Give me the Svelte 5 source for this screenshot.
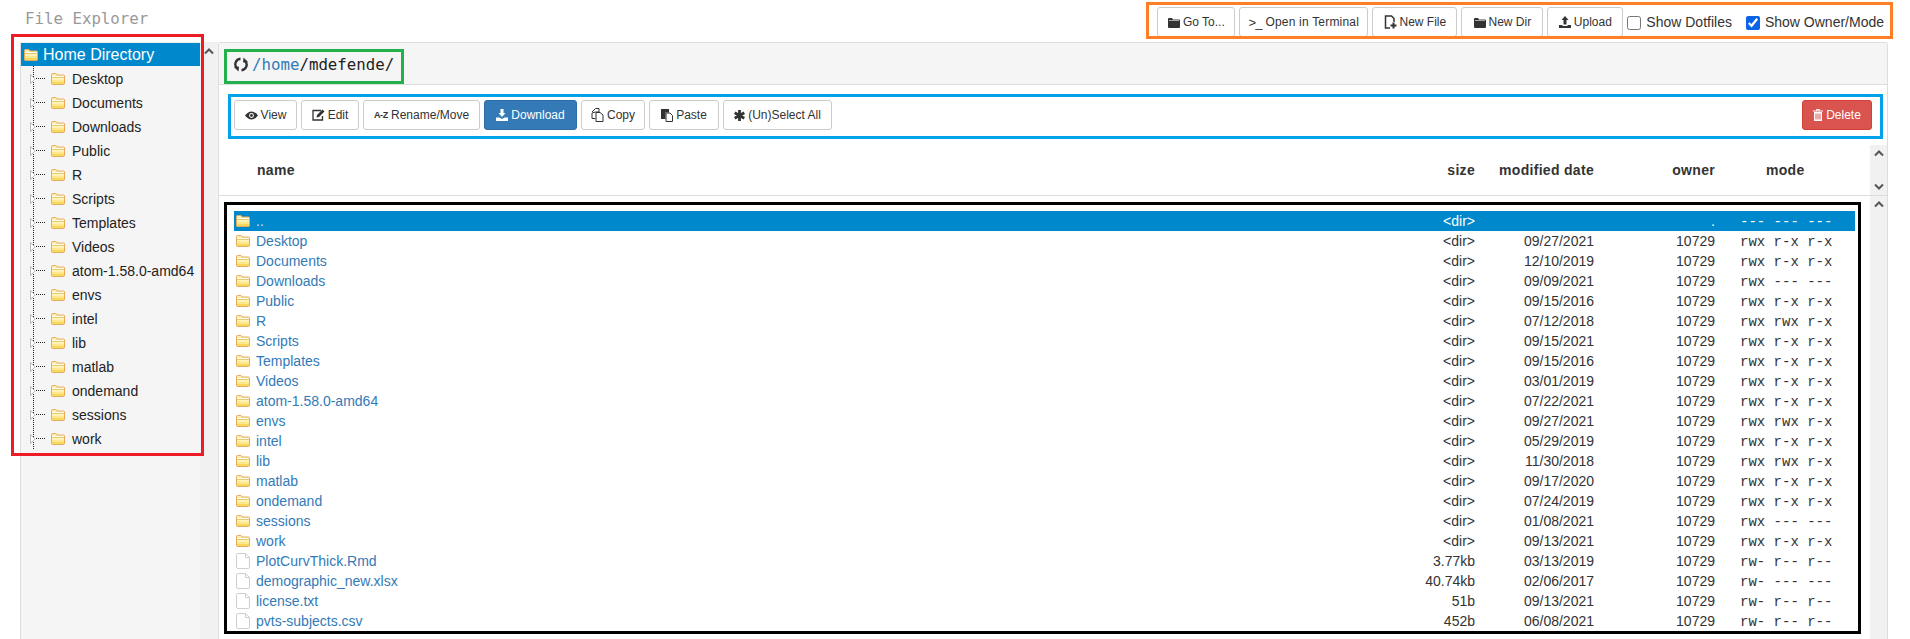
<script>
  const treeDirs = ["Desktop", "Documents", "Downloads", "Public", "R", "Scripts", "Templates", "Videos", "atom-1.58.0-amd64", "envs", "intel", "lib", "matlab", "ondemand", "sessions", "work"];

  const rwx = "rwx r-x r-x";
  const files = [
    { name: "..", dir: true, size: "<dir>", date: "", owner: ".", mode: "--- --- ---", selected: true },
    { name: "Desktop", dir: true, size: "<dir>", date: "09/27/2021", owner: "10729", mode: rwx },
    { name: "Documents", dir: true, size: "<dir>", date: "12/10/2019", owner: "10729", mode: rwx },
    { name: "Downloads", dir: true, size: "<dir>", date: "09/09/2021", owner: "10729", mode: "rwx --- ---" },
    { name: "Public", dir: true, size: "<dir>", date: "09/15/2016", owner: "10729", mode: rwx },
    { name: "R", dir: true, size: "<dir>", date: "07/12/2018", owner: "10729", mode: "rwx rwx r-x" },
    { name: "Scripts", dir: true, size: "<dir>", date: "09/15/2021", owner: "10729", mode: rwx },
    { name: "Templates", dir: true, size: "<dir>", date: "09/15/2016", owner: "10729", mode: rwx },
    { name: "Videos", dir: true, size: "<dir>", date: "03/01/2019", owner: "10729", mode: rwx },
    { name: "atom-1.58.0-amd64", dir: true, size: "<dir>", date: "07/22/2021", owner: "10729", mode: rwx },
    { name: "envs", dir: true, size: "<dir>", date: "09/27/2021", owner: "10729", mode: "rwx rwx r-x" },
    { name: "intel", dir: true, size: "<dir>", date: "05/29/2019", owner: "10729", mode: rwx },
    { name: "lib", dir: true, size: "<dir>", date: "11/30/2018", owner: "10729", mode: "rwx rwx r-x" },
    { name: "matlab", dir: true, size: "<dir>", date: "09/17/2020", owner: "10729", mode: rwx },
    { name: "ondemand", dir: true, size: "<dir>", date: "07/24/2019", owner: "10729", mode: rwx },
    { name: "sessions", dir: true, size: "<dir>", date: "01/08/2021", owner: "10729", mode: "rwx --- ---" },
    { name: "work", dir: true, size: "<dir>", date: "09/13/2021", owner: "10729", mode: rwx },
    { name: "PlotCurvThick.Rmd", size: "3.77kb", date: "03/13/2019", owner: "10729", mode: "rw- r-- r--" },
    { name: "demographic_new.xlsx", size: "40.74kb", date: "02/06/2017", owner: "10729", mode: "rw- --- ---" },
    { name: "license.txt", size: "51b", date: "09/13/2021", owner: "10729", mode: "rw- r-- r--" },
    { name: "pvts-subjects.csv", size: "452b", date: "06/08/2021", owner: "10729", mode: "rw- r-- r--" }
  ];
</script>

{#snippet folder()}
  <svg class="folder" width="14" height="12" viewBox="0 0 14 12">
    <path d="M.5 1.5Q.5.5 1.5.5H5L6 2H12.500Q13.500 2 13.500 3V10.500Q13.500 11.500 12.500 11.500H1.500Q.5 11.500.5 10.500Z" fill="#fdf0b0" stroke="#e6ac5c" />
    <rect x="1" y="3" width="12" height="1" fill="#fffdf2" />
    <rect x="1" y="4" width="12" height="1" fill="#e9c877" />
    <rect x="1" y="5" width="12" height="2" fill="#fff3b5" />
    <rect x="1" y="7" width="12" height="2" fill="#fde88c" />
    <rect x="1" y="9" width="12" height="2" fill="#f8d75f" />
  </svg>
{/snippet}

{#snippet fileIcon()}
  <svg class="folder" width="14" height="16" viewBox="0 0 14 16">
    <path d="M1.500.5H9.500L13.500 4.500V14Q13.500 15.500 12 15.500H2Q.5 15.500.5 14V1.500Q.5.5 1.500.5Z" fill="#fff" stroke="#cfcfcf" />
    <path d="M9.500.5V4.500H13.500" fill="none" stroke="#cfcfcf" />
  </svg>
{/snippet}

{#snippet chevron(down)}
  <svg class="chev" width="10" height="7" viewBox="0 0 10 7">
    <path d={down ? "M1 1.500 5 5.500 9 1.500" : "M1 5.500 5 1.500 9 5.500"} fill="none" stroke="#555" stroke-width="2" />
  </svg>
{/snippet}

{#snippet folderOpen()}
  <svg width="12" height="11" viewBox="0 0 12 11"><path d="M0 2Q0 1 1 1H4L5 2.500H11Q12 2.500 12 3.500V10Q12 11 11 11H1Q0 11 0 10Z" fill="currentColor" /><path d="M1 3.500H11" stroke="#fff" stroke-width=".6" /></svg>
{/snippet}

<div class="page">
  <header class="top">
    <h1>File Explorer</h1>
    <div class="top-tools">
      <button class="w78">{@render folderOpen()} Go To...</button>
      <button class="w129 wide"><span class="term">&gt;_</span> Open in Terminal</button>
      <button class="w85">
        <svg width="13" height="14" viewBox="0 0 13 14"><path d="M6 13H1.500V1H7.500L10 3.500V7" fill="none" stroke="currentColor" stroke-width="1.500" /><path d="M9.500 7.500V13.500M6.500 10.500H12.500" stroke="currentColor" stroke-width="2" /></svg>
        New File
      </button>
      <button class="w82">{@render folderOpen()} New Dir</button>
      <button class="w76">
        <svg width="12" height="12" viewBox="0 0 12 12"><path d="M6 0 9.500 4H7.500V8.500H4.500V4H2.500Z M0 9H3.500V10H8.500V9H12V12H0Z" fill="currentColor" /></svg>
        Upload
      </button>
      <label><input type="checkbox" /> Show Dotfiles</label>
      <label><input type="checkbox" checked /> Show Owner/Mode</label>
    </div>
  </header>

  <main class="panes">
    <aside class="tree">
      <div class="tree-list">
        <div class="home">{@render folder()}<span>Home Directory</span></div>
        <ul>
          {#each treeDirs as d}
            <li>
              <svg class="tri" width="6" height="10" viewBox="0 0 6 10"><path d="M.5.5 5 5 .5 9.500Z" fill="#fff" stroke="#bbb" /></svg>
              <i class="dash"></i>
              {@render folder()}
              <span>{d}</span>
            </li>
          {/each}
        </ul>
      </div>
      <div class="scroll">{@render chevron(false)}</div>
    </aside>

    <section class="content">
      <div class="crumb">
        <svg width="14" height="15" viewBox="0 0 14 15"><path d="M6.500 1.800A5.500 5.500 0 0 0 3 11.200M7.500 13.200A5.500 5.500 0 0 0 11 3.800" fill="none" stroke="#333" stroke-width="2.400" /><path d="M0 10 5 9.500 4.500 14.500ZM14 5 9 5.500 9.500 .5Z" fill="#333" /></svg>
        <span class="path"><a href="#/">/home</a>/mdefende/</span>
      </div>

      <div class="actions">
        <button class="w63">
          <svg width="13" height="9" viewBox="0 0 13 9"><path d="M0 4.500Q6.500-3.500 13 4.500 6.500 12.500 0 4.500Z" fill="currentColor" /><circle cx="6.500" cy="4.500" r="2.400" fill="#fff" /><circle cx="6.500" cy="4.500" r="1.400" fill="currentColor" /></svg>
          View
        </button>
        <button class="w58">
          <svg width="13" height="12" viewBox="0 0 13 12"><path d="M9 1.500H1V11H10.500V7" fill="none" stroke="currentColor" stroke-width="1.300" /><path d="M4.500 8.500 5 6 10.500.5 12.500 2.500 7 8Z" fill="currentColor" /></svg>
          Edit
        </button>
        <button class="w117"><span class="az">A-Z</span> Rename/Move</button>
        <button class="primary w93">
          <svg width="12" height="12" viewBox="0 0 12 12"><path d="M4.500 0H7.500V4H9.500L6 8 2.500 4H4.500Z M0 8.500H3.500L6 10 8.500 8.500H12V12H0Z" fill="currentColor" /></svg>
          Download
        </button>
        <button class="w64">
          <svg width="13" height="14" viewBox="0 0 13 14"><path d="M4.500.5H8V4H4.500L1 5V10.500H4.500M4.500.5 1 4" fill="none" stroke="currentColor" /><path d="M5 4.500H9L12 7V13.500H5Z" fill="#fff" stroke="currentColor" /></svg>
          Copy
        </button>
        <button class="w70">
          <svg width="12" height="14" viewBox="0 0 12 14"><path d="M0 1H8V4.500H4.500V11H0Z" fill="currentColor" /><path d="M5 5H9L11.500 7.500V13.500H5Z" fill="#fff" stroke="currentColor" /></svg>
          Paste
        </button>
        <button class="w109">
          <svg width="11" height="11" viewBox="0 0 11 11"><path d="M5.500 0V11M.7 2.700 10.300 8.300M.7 8.300 10.300 2.700" stroke="currentColor" stroke-width="2.800" /></svg>
          (Un)Select All
        </button>
        <button class="danger w70">
          <svg width="10" height="12" viewBox="0 0 10 12"><path d="M0 2H10M3.500 2V.5H6.500V2" fill="none" stroke="currentColor" /><path d="M1 3H9V12H1Z" fill="currentColor" /><path d="M3 4.500V10.500M5 4.500V10.500M7 4.500V10.500" stroke="#d9534f" /></svg>
          Delete
        </button>
      </div>

      <div class="head-wrap">
        <div class="row head">
          <span></span>
          <span class="name">name</span>
          <span class="num">size</span>
          <span class="num">modified date</span>
          <span class="num">owner</span>
          <span class="mode-head">mode</span>
        </div>
        <div class="scroll short">{@render chevron(false)}{@render chevron(true)}</div>
      </div>

      <div class="body-wrap">
        <div class="rows">
          {#each files as f}
            <div class="row" class:selected={f.selected}>
              {#if f.dir}{@render folder()}{:else}{@render fileIcon()}{/if}
              <a href="#/" class="name">{f.name}</a>
              <span class="num">{f.size}</span>
              <span class="num">{f.date}</span>
              <span class="num">{f.owner}</span>
              <span class="mode">{f.mode}</span>
            </div>
          {/each}
        </div>
        <div class="scroll">{@render chevron(false)}</div>
      </div>
    </section>
  </main>

  <!-- annotation boxes drawn on top of the screenshot -->
  <div class="mark red"></div>
  <div class="mark green"></div>
  <div class="mark blue"></div>
  <div class="mark black"></div>
  <div class="mark orange"></div>
</div>

<style>
  :global(body) {
    margin: 0;
    background: #fff;
    font-family: "Liberation Sans", Arial, sans-serif;
    font-size: 14px;
    color: #333;
  }
  .page {
    position: relative;
    height: 639px;
    overflow: hidden;
    display: flex;
    flex-direction: column;
  }
  .top {
    height: 42px;
    flex: none;
    display: flex;
    justify-content: space-between;
    padding: 7px 26px 0 25px;
    box-sizing: border-box;
  }
  h1 {
    margin: 2px 0 0;
    font: 400 15.75px/20px "DejaVu Sans Mono", monospace;
    color: #999;
  }
  button {
    height: 30px;
    padding: 0;
    font: 12px "Liberation Sans", Arial, sans-serif;
    color: #333;
    background: #fff;
    border: 1px solid #ccc;
    border-radius: 3px;
    display: inline-flex;
    align-items: center;
    justify-content: center;
    gap: 3px;
    white-space: nowrap;
    box-sizing: border-box;
    flex: none;
  }
  .w58 { width: 58px; }
  .w63 { width: 63px; }
  .w64 { width: 64px; }
  .w70 { width: 70px; }
  .w76 { width: 76px; }
  .w78 { width: 78px; }
  .w82 { width: 82px; }
  .w85 { width: 85px; }
  .w93 { width: 93px; }
  .w109 { width: 109px; }
  .w117 { width: 117px; }
  .w129 { width: 129px; }
  .wide {
    letter-spacing: .2px;
  }
  .top-tools {
    display: flex;
    align-items: flex-start;
    gap: 4px;
  }
  .top-tools label {
    display: flex;
    align-items: center;
    gap: 5px;
    height: 30px;
    margin-right: 10px;
  }
  .top-tools label:last-child {
    margin-right: 0;
  }
  input {
    width: 14px;
    height: 14px;
    margin: 2px 0 0;
    accent-color: #0b63e5;
  }
  .term {
    font-size: 13px;
    letter-spacing: -1px;
    margin-right: 1px;
  }
  .panes {
    flex: 1;
    display: flex;
    padding: 0 22px 0 20px;
    min-height: 0;
  }
  .tree {
    width: 198px;
    flex: none;
    display: flex;
    background: #f5f5f5;
    border-left: 1px solid #ddd;
    border-top: 1px solid #eee;
    box-sizing: border-box;
  }
  .tree-list {
    width: 179px;
    flex: none;
  }
  .home {
    height: 23px;
    padding-left: 3px;
    display: flex;
    align-items: center;
    gap: 5px;
    font-size: 16px;
    color: #fff;
    background: #0088cc;
  }
  ul {
    list-style: none;
    margin: 0;
    padding: 0;
    background: linear-gradient(#222 50%, transparent 50%) 12px 0 / 1px 2px repeat-y;
  }
  li {
    height: 24px;
    display: flex;
    align-items: center;
    padding: 1px 0 0 9px;
    box-sizing: border-box;
    color: #222;
  }
  .dash {
    width: 9px;
    height: 1px;
    margin-right: 6px;
    background: repeating-linear-gradient(90deg, #222 0 1px, transparent 1px 2px);
  }
  .folder {
    flex: none;
  }
  li .folder {
    margin-right: 7px;
  }
  .scroll {
    width: 17px;
    flex: none;
    background: #f1f1f1;
    display: flex;
    flex-direction: column;
    align-items: center;
    padding-top: 5px;
    box-sizing: border-box;
  }
  .scroll.short {
    justify-content: space-between;
    padding: 5px 0 5px;
  }
  .content {
    flex: 1;
    min-width: 0;
    display: flex;
    flex-direction: column;
    border: 1px solid #ddd;
    border-bottom: 0;
    border-radius: 3px 3px 0 0;
  }
  .crumb {
    height: 42px;
    flex: none;
    background: #f5f5f5;
    border-bottom: 1px solid #ddd;
    display: flex;
    align-items: center;
    gap: 4px;
    padding: 1px 0 0 15px;
    box-sizing: border-box;
  }
  .path {
    font: 15.75px "DejaVu Sans Mono", monospace;
    color: #222;
  }
  a {
    color: #337ab7;
    text-decoration: none;
  }
  .actions {
    flex: none;
    height: 60px;
    padding: 15px 15px 0 15px;
    box-sizing: border-box;
    display: flex;
    gap: 4px;
  }
  .primary {
    color: #fff;
    background: #337ab7;
    border-color: #2e6da4;
  }
  .danger {
    margin-left: auto;
    color: #fff;
    background: #d9534f;
    border-color: #d43f3a;
  }
  .az {
    font-size: 9px;
    font-weight: 700;
    letter-spacing: -.3px;
  }
  .head-wrap {
    height: 51px;
    flex: none;
    display: flex;
    justify-content: space-between;
    border-bottom: 1px solid #ddd;
    box-sizing: border-box;
  }
  .body-wrap {
    flex: 1;
    display: flex;
    justify-content: space-between;
    min-height: 0;
  }
  .rows {
    padding: 15px 0 0 15px;
  }
  .row {
    width: 1621px;
    height: 20px;
    display: grid;
    grid-template-columns: 22px 1fr 70px 119px 121px 140px;
    align-items: center;
    box-sizing: border-box;
    white-space: nowrap;
  }
  .row .folder {
    margin-left: 2px;
  }
  .head {
    height: 50px;
    margin-left: 15px;
    font-weight: 700;
    color: #333;
    letter-spacing: .3px;
  }
  .head .name {
    padding-left: 1px;
  }
  .num {
    text-align: right;
  }
  .mode {
    padding: 2px 0 0 25px;
    font: 14px "Liberation Mono", monospace;
  }
  .mode-head {
    padding-left: 51px;
  }
  .selected {
    background: #0088cc;
    color: #fff;
  }
  .selected a {
    color: #cfe6f5;
  }
  .mark {
    position: absolute;
    box-sizing: border-box;
    border: 3px solid;
    pointer-events: none;
  }
  .red {
    left: 11px;
    top: 34px;
    width: 193px;
    height: 422px;
    border-color: #ed1c24;
  }
  .green {
    left: 224px;
    top: 49px;
    width: 180px;
    height: 35px;
    border-color: #22b14c;
  }
  .blue {
    left: 228px;
    top: 94px;
    width: 1655px;
    height: 45px;
    border-color: #00a2e8;
  }
  .black {
    left: 224px;
    top: 202px;
    width: 1637px;
    height: 432px;
    border-color: #000;
  }
  .orange {
    left: 1146px;
    top: 2px;
    width: 747px;
    height: 37px;
    border-color: #ff7f27;
  }
</style>
